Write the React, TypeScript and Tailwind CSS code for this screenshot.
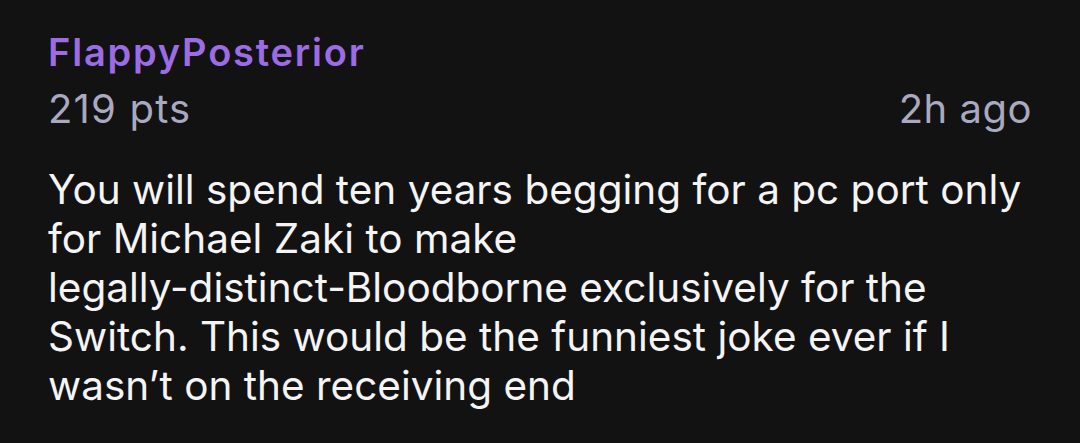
export default function App() {
  return (
    <div className="w-[1080px] h-[443px] bg-[#121212] px-12 pt-[28px] font-['Inter',sans-serif] overflow-hidden">
      {/* Header */}
      <div className="text-[38px] leading-[48px] font-semibold tracking-[1.8px] text-[#9b6ce3]">FlappyPosterior</div>
      <div className="mt-[9px] flex justify-between items-center text-[40px] leading-[48px] tracking-[1.2px] text-[#a9a9c0]">
        <span>219 pts</span>
        <span className="tracking-[0.5px]">2h ago</span>
      </div>

      {/* Comment body */}
      <p className="mt-[32px] text-[40.5px] leading-[49px] whitespace-nowrap text-[#f4f4f4]">
        You will spend ten years begging for a pc port only
        <br />
        for Michael Zaki to make
        <br />
        legally-distinct-Bloodborne exclusively for the
        <br />
        Switch. This would be the funniest joke ever if I
        <br />
        wasn’t on the receiving end
      </p>
    </div>
  )
}
